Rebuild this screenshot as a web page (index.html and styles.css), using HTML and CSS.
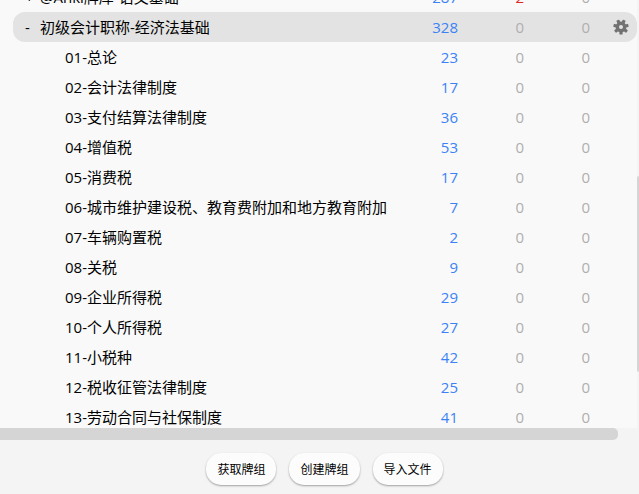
FILE: index.html
```
<!DOCTYPE html>
<html lang="zh-CN">

<head>
    <meta charset="UTF-8">
    <meta name="viewport" content="width=device-width, initial-scale=1.0">
    <title>牌组</title>
    <link rel="stylesheet" href="styles.css">
</head>

<body>
    <main class="deck-area">
        <div class="deck-list">
            <table class="decks">
                <tbody>
                    <tr>
                        <td class="name"><a class="toggle" href="#">+</a><a href="#">@Anki牌库-语文基础</a></td>
                        <td class="count new">287</td>
                        <td class="count learn">2</td>
                        <td class="count">0</td>
                        <td class="options"></td>
                    </tr>
                    <tr class="current">
                        <td class="name"><a class="toggle" href="#">-</a><a href="#">初级会计职称-经济法基础</a></td>
                        <td class="count new">328</td>
                        <td class="count">0</td>
                        <td class="count">0</td>
                        <td class="options">
                            <button class="gear" aria-label="选项">
                                <svg viewBox="0 0 16 16" width="16" height="16">
                                    <g fill="#727272">
                                        <rect id="tooth" x="6.4" y="12" width="3.2" height="3.6" rx="0.6" />
                                        <use href="#tooth" transform="rotate(51.4 8 8)" />
                                        <use href="#tooth" transform="rotate(102.9 8 8)" />
                                        <use href="#tooth" transform="rotate(154.3 8 8)" />
                                        <use href="#tooth" transform="rotate(205.7 8 8)" />
                                        <use href="#tooth" transform="rotate(257.1 8 8)" />
                                        <use href="#tooth" transform="rotate(308.6 8 8)" />
                                    </g>
                                    <circle cx="8" cy="8" r="3.7" fill="none" stroke="#727272" stroke-width="3.4" />
                                </svg>
                            </button>
                        </td>
                    </tr>
                    <tr>
                        <td class="name child"><a href="#">01-总论</a></td>
                        <td class="count new">23</td>
                        <td class="count">0</td>
                        <td class="count">0</td>
                        <td class="options"></td>
                    </tr>
                    <tr>
                        <td class="name child"><a href="#">02-会计法律制度</a></td>
                        <td class="count new">17</td>
                        <td class="count">0</td>
                        <td class="count">0</td>
                        <td class="options"></td>
                    </tr>
                    <tr>
                        <td class="name child"><a href="#">03-支付结算法律制度</a></td>
                        <td class="count new">36</td>
                        <td class="count">0</td>
                        <td class="count">0</td>
                        <td class="options"></td>
                    </tr>
                    <tr>
                        <td class="name child"><a href="#">04-增值税</a></td>
                        <td class="count new">53</td>
                        <td class="count">0</td>
                        <td class="count">0</td>
                        <td class="options"></td>
                    </tr>
                    <tr>
                        <td class="name child"><a href="#">05-消费税</a></td>
                        <td class="count new">17</td>
                        <td class="count">0</td>
                        <td class="count">0</td>
                        <td class="options"></td>
                    </tr>
                    <tr>
                        <td class="name child"><a href="#">06-城市维护建设税、教育费附加和地方教育附加</a></td>
                        <td class="count new">7</td>
                        <td class="count">0</td>
                        <td class="count">0</td>
                        <td class="options"></td>
                    </tr>
                    <tr>
                        <td class="name child"><a href="#">07-车辆购置税</a></td>
                        <td class="count new">2</td>
                        <td class="count">0</td>
                        <td class="count">0</td>
                        <td class="options"></td>
                    </tr>
                    <tr>
                        <td class="name child"><a href="#">08-关税</a></td>
                        <td class="count new">9</td>
                        <td class="count">0</td>
                        <td class="count">0</td>
                        <td class="options"></td>
                    </tr>
                    <tr>
                        <td class="name child"><a href="#">09-企业所得税</a></td>
                        <td class="count new">29</td>
                        <td class="count">0</td>
                        <td class="count">0</td>
                        <td class="options"></td>
                    </tr>
                    <tr>
                        <td class="name child"><a href="#">10-个人所得税</a></td>
                        <td class="count new">27</td>
                        <td class="count">0</td>
                        <td class="count">0</td>
                        <td class="options"></td>
                    </tr>
                    <tr>
                        <td class="name child"><a href="#">11-小税种</a></td>
                        <td class="count new">42</td>
                        <td class="count">0</td>
                        <td class="count">0</td>
                        <td class="options"></td>
                    </tr>
                    <tr>
                        <td class="name child"><a href="#">12-税收征管法律制度</a></td>
                        <td class="count new">25</td>
                        <td class="count">0</td>
                        <td class="count">0</td>
                        <td class="options"></td>
                    </tr>
                    <tr>
                        <td class="name child"><a href="#">13-劳动合同与社保制度</a></td>
                        <td class="count new">41</td>
                        <td class="count">0</td>
                        <td class="count">0</td>
                        <td class="options"></td>
                    </tr>
                </tbody>
            </table>
        </div>
        <div class="scroll-y"><div class="thumb"></div></div>
    </main>
    <div class="scroll-x"><div class="thumb"></div></div>
    <footer class="toolbar">
        <button>获取牌组</button>
        <button>创建牌组</button>
        <button>导入文件</button>
    </footer>
</body>

</html>
```
FILE: styles.css
```
* {
    box-sizing: border-box;
}

body {
    margin: 0;
    height: 100vh;
    display: flex;
    flex-direction: column;
    overflow: hidden;
    background: #f4f4f4;
    color: #000;
    font-family: "Open Sans", "Noto Sans CJK SC", sans-serif;
    font-size: 15px;
    line-height: 20px;
}

a {
    color: inherit;
    text-decoration: none;
}

.deck-area {
    flex: 1;
    min-height: 0;
    display: flex;
    overflow: hidden;
}

.deck-list {
    flex: 1;
    min-width: 0;
    padding-left: 13px;
    background: #f9f9f9;
}

/* list is scrolled part way into its first row */
.decks {
    width: 100%;
    margin-top: -18px;
    border-collapse: collapse;
}

.decks tr {
    height: 30px;
}

.decks td {
    padding: 0;
    white-space: nowrap;
}

.decks .name {
    padding-left: 12px;
}

.decks .child {
    padding-left: 52px;
}

.toggle {
    display: inline-block;
    width: 15px;
}

.decks .count {
    width: 66px;
    text-align: right;
    color: #afafaf;
}

.decks .new {
    color: #3b82f6;
}

.decks .learn {
    color: #dc2626;
}

.decks .options {
    width: 47px;
    padding: 0 8px 4px 0;
    text-align: right;
}

.current td {
    background: #e3e3e3;
}

.current td:first-child {
    border-radius: 12px 0 0 12px;
}

.current td:last-child {
    border-radius: 0 12px 12px 0;
}

.gear {
    padding: 0;
    border: 0;
    background: none;
    vertical-align: middle;
    cursor: pointer;
}

.gear svg {
    display: block;
}

.scroll-y {
    width: 2px;
    display: flex;
    flex-direction: column;
}

.scroll-y::before {
    content: "";
    flex: 176;
}

.scroll-y::after {
    content: "";
    flex: 56;
}

.scroll-y .thumb {
    flex: 196;
    border-radius: 10px 0 0 10px;
    background: #d5d5d5;
}

.scroll-x {
    height: 12px;
    padding-right: 21px;
}

.scroll-x .thumb {
    height: 100%;
    border-radius: 0 5px 5px 0;
    background: #d5d5d5;
}

.toolbar {
    display: flex;
    justify-content: center;
    gap: 13px;
    padding: 13px 0 9px;
    margin-left: 10px;
}

.toolbar button {
    height: 32px;
    padding: 0 11px;
    border: 0;
    border-radius: 15px;
    background: #fcfcfc;
    box-shadow: 0 1px 2px rgba(0, 0, 0, 0.35);
    color: #000;
    font-family: inherit;
    font-size: 12px;
    cursor: pointer;
}
```
